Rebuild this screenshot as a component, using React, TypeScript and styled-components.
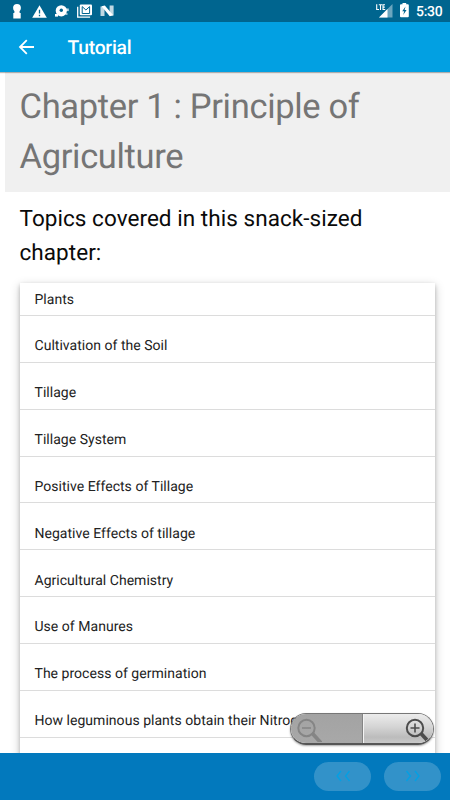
import React from "react";
import styled, { createGlobalStyle } from "styled-components";

const GlobalStyle = createGlobalStyle`
  * { box-sizing: border-box; }
  body { margin: 0; background: #fff; font-family: Roboto, sans-serif; text-rendering: geometricPrecision; }
`;

const Screen = styled.div`
  width: 450px;
  height: 800px;
  display: flex;
  flex-direction: column;
  overflow: hidden;
  position: relative;
  background: #fff;
`;

const StatusBar = styled.div`
  height: 22px;
  flex: none;
  display: flex;
  justify-content: space-between;
  background: #00658f;
  color: #fff;
`;

const StatusIcons = styled.svg`
  display: block;
  flex: none;
`;

const StatusRight = styled.div`
  display: flex;
`;

const Clock = styled.span`
  width: 34px;
  font-size: 14px;
  line-height: 24px;
  font-weight: 500;
  letter-spacing: -0.3px;
  white-space: nowrap;
`;

const AppBar = styled.header`
  height: 50px;
  flex: none;
  display: flex;
  align-items: center;
  background: #02a0e2;
  color: #fff;
  box-shadow: 0 1px 1px rgba(0, 0, 0, 0.28);
  z-index: 1;
`;

const BackButton = styled.button`
  width: 67.5px;
  height: 50px;
  padding: 0 0 0 18px;
  border: 0;
  background: none;
  color: inherit;

  svg { display: block; }
`;

const BarTitle = styled.span`
  padding-top: 2px;
  font-size: 19.3px;
  font-weight: 500;
  line-height: 50px;
  letter-spacing: -0.25px;
`;

const Content = styled.main`
  flex: 1;
  min-height: 0;
  overflow: hidden;
`;

const ChapterTitle = styled.h1`
  margin: 0 0 0 5px;
  height: 120px;
  padding: 10px 15px 0 14.5px;
  background: #f0f0f0;
  color: #757575;
  font-size: 34.5px;
  font-weight: 400;
  line-height: 50px;
  letter-spacing: -0.33px;
`;

const Intro = styled.p`
  margin: 0;
  height: 91px;
  padding: 10px 20px 0 19.5px;
  color: #0a0a0a;
  font-size: 22.5px;
  line-height: 34px;
  letter-spacing: 0.05px;
`;

const TopicList = styled.ul`
  margin: 0 15px 0 20px;
  padding: 0;
  height: 560px;
  list-style: none;
  background: #fff;
  box-shadow: 0 2px 4px rgba(0, 0, 0, 0.22), 0 3px 10px rgba(0, 0, 0, 0.2);
`;

const Topic = styled.li`
  height: 46.85px;
  display: flex;
  align-items: flex-end;
  padding: 0 15px 5.5px 14.5px;
  border-bottom: 1px solid #dcdcdc;
  color: #222;
  font-size: 14px;
  line-height: 20px;
  letter-spacing: 0.03px;
  white-space: nowrap;

  &:first-child { height: 33px; }
`;

const ZoomControl = styled.div`
  position: absolute;
  left: 290px;
  top: 713px;
  width: 144px;
  height: 32px;
  display: flex;
  border: 1px solid #777;
  border-bottom: 2px solid #565656;
  border-radius: 16px;
  overflow: hidden;
  box-shadow: 0 1px 2px rgba(0, 0, 0, 0.35);
`;

const ZoomHalf = styled.button<{ $disabled?: boolean }>`
  flex: 1;
  display: flex;
  align-items: center;
  justify-content: ${(p) => (p.$disabled ? "flex-start" : "flex-end")};
  padding: ${(p) => (p.$disabled ? "0 0 0 4px" : "0 3px 0 0")};
  border: 0;
  border-left: ${(p) => (p.$disabled ? "0" : "1px solid #f4f4f4")};
  border-right: ${(p) => (p.$disabled ? "1px solid #858585" : "0")};
  background: ${(p) =>
    p.$disabled
      ? "linear-gradient(#a3a3a3, #a8a8a8)"
      : "linear-gradient(#ececec, #d4d4d4 45%, #bcbcbc 80%, #c8c8c8)"};
`;

const BottomBar = styled.footer`
  height: 47px;
  flex: none;
  display: flex;
  align-items: center;
  justify-content: flex-end;
  gap: 13px;
  padding: 0 9px 1px 0;
  background: #0279bd;
  z-index: 1;
`;

const PageButton = styled.button`
  width: 57px;
  height: 29px;
  padding: 0;
  display: grid;
  place-items: center;
  border: 0;
  border-radius: 15px;
  background: #3292c9;
`;

const topics = [
  "Plants",
  "Cultivation of the Soil",
  "Tillage",
  "Tillage System",
  "Positive Effects of Tillage",
  "Negative Effects of tillage",
  "Agricultural Chemistry",
  "Use of Manures",
  "The process of germination",
  "How leguminous plants obtain their Nitrogen",
];

const Notifications = () => (
  <StatusIcons width="120" height="22" viewBox="0 0 120 22" fill="#fff">
    <circle cx="17" cy="7.8" r="3.9" />
    <path d="M14.6 10h4.8l.3 3h1v5.5h-7.4V13h1z" />
    <path d="M39.5 5.2L46.8 17.8H32.2z" />
    <path d="M39.5 9.8v3.7M39.5 14.8v1.4" stroke="#00658f" strokeWidth="1.3" />
    <circle cx="61.3" cy="10.8" r="5.6" />
    <circle cx="61.3" cy="10.2" r="1.7" fill="#00658f" />
    <rect x="55" y="14" width="3" height="2.6" />
    <rect x="66" y="8.5" width="2.8" height="2.6" opacity=".75" />
    <rect x="65.5" y="13" width="2" height="2" opacity=".6" />
    <path d="M77.7 6.8v10.4h12.4" fill="none" stroke="#fff" strokeWidth="1.3" />
    <rect x="79.8" y="4.4" width="12.2" height="10.8" rx="1" />
    <path d="M82.2 13.5V6.6l3.7 3.4 3.7-3.4v6.9z" fill="none" stroke="#00658f" strokeWidth="1" />
    <path d="M100.5 6.4h4v9.6h-4zM109.6 5.6h4v9.8h-4z" opacity=".75" />
    <path d="M101.5 6.2l3.3-.6 8.4 9.6-3.4 1z" />
  </StatusIcons>
);

const Signals = () => (
  <StatusIcons width="56" height="22" viewBox="360 0 56 22" fill="#fff">
    <path d="M392.5 4v13.4H379z" opacity=".42" />
    <path d="M387.5 9v8.4H379z" />
    <path d="M376.7 4.2V9.5h2.3M378.8 4.7h3.4M380.5 4.5v5.5M385 4.7h-2v4.8h2.2M383 7.1h1.8" fill="none" stroke="#fff" strokeWidth="1.1" />
    <path d="M402.5 3h3.7v1.3h1.6q1 0 1 1v11q0 1-1 1h-6.8q-1 0-1-1v-11q0-1 1-1h1.5z" />
    <path d="M405.5 6.5l-3.3 4.7h2l-1 3.7 3.4-5h-2z" fill="#00658f" />
  </StatusIcons>
);

const Magnifier = ({ plus }: { plus?: boolean }) => (
  <svg width="27" height="27" viewBox="0 0 27 27" fill="none" stroke={plus ? "#4d4d4d" : "#858585"}>
    <path d={plus ? "M17.5 18L24 25" : "M17 18L27 29"} strokeWidth="3.8" />
    <circle cx={plus ? 12 : 11.5} cy="13" r="8.2" strokeWidth="2" />
    <path d={plus ? "M7.5 13h9M12 8.5v9" : "M7 13h9"} strokeWidth="1.6" />
  </svg>
);

const Chevrons = ({ next }: { next?: boolean }) => (
  <svg width="16" height="12" viewBox="0 0 16 12" fill="none" stroke="#03a0e4" strokeWidth="1.3">
    <path d={next ? "M1.5 1l4 5-4 5M10 1l4 5-4 5" : "M6 1L2 6l4 5M14.5 1l-4 5 4 5"} />
  </svg>
);

export default function App() {
  return (
    <>
      <GlobalStyle />
      <Screen>
        <StatusBar>
          <Notifications />
          <StatusRight>
            <Signals />
            <Clock>5:30</Clock>
          </StatusRight>
        </StatusBar>
        <AppBar>
          <BackButton aria-label="Back">
            <svg width="17" height="16" viewBox="0 0 17 16" fill="none" stroke="#fff" strokeWidth="1.8">
              <path d="M16 8H2.4M8.8 1.2L2 8l6.8 6.8" />
            </svg>
          </BackButton>
          <BarTitle>Tutorial</BarTitle>
        </AppBar>
        <Content>
          <ChapterTitle>Chapter 1 : Principle of Agriculture</ChapterTitle>
          <Intro>Topics covered in this snack-sized chapter:</Intro>
          <TopicList>
            {topics.map((topic) => (
              <Topic key={topic}>{topic}</Topic>
            ))}
          </TopicList>
        </Content>
        <BottomBar>
          <PageButton aria-label="Previous"><Chevrons /></PageButton>
          <PageButton aria-label="Next"><Chevrons next /></PageButton>
        </BottomBar>
        <ZoomControl>
          <ZoomHalf $disabled aria-label="Zoom out"><Magnifier /></ZoomHalf>
          <ZoomHalf aria-label="Zoom in"><Magnifier plus /></ZoomHalf>
        </ZoomControl>
      </Screen>
    </>
  );
}
